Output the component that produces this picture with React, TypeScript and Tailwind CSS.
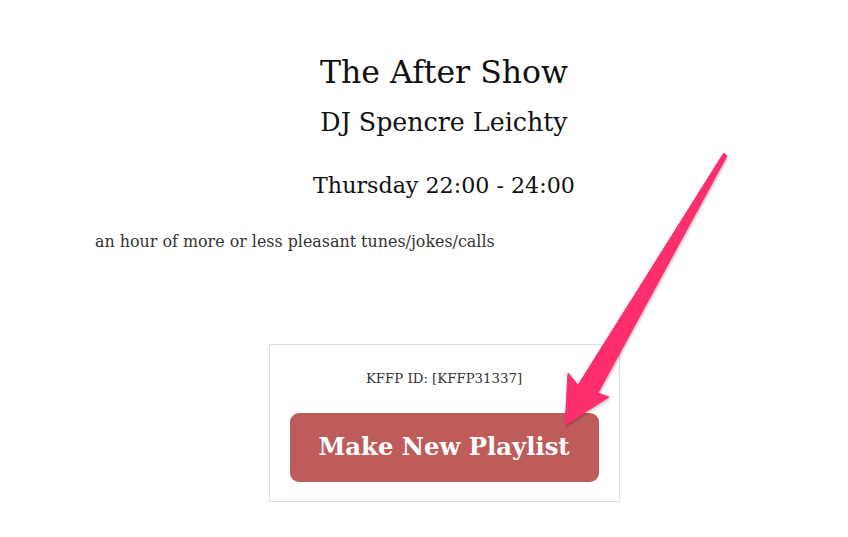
import React from "react";

export default function App() {
  const serif = { fontFamily: '"DejaVu Serif", "Liberation Serif", serif' };
  return (
    <div className="relative w-[848px] h-[537px] bg-white overflow-hidden" style={serif}>
      <div className="ml-[95px] w-[698px] pt-[50px] flex flex-col">
        <h1 className="text-center text-[31.5px] leading-[44px] text-[#111]">The After Show</h1>
        <h2 className="mt-[12px] text-center text-[25.3px] leading-[34px] text-[#111]">DJ Spencre Leichty</h2>
        <h3 className="mt-[30px] text-center text-[22.2px] leading-[30px] text-[#111]">Thursday 22:00 - 24:00</h3>
        <p className="mt-[30px] text-[15.9px] leading-[24px] text-[#333]">an hour of more or less pleasant tunes/jokes/calls</p>
        <div className="mt-[90px] self-center w-[351px] h-[158px] border border-[#dedede] flex flex-col items-center">
          <div className="mt-[24px] text-[13.3px] leading-[20px] text-[#333]">KFFP ID: [KFFP31337]</div>
          <button className="mt-[24px] w-[309px] h-[69px] rounded-[9px] bg-[#be5b5b] text-white font-bold text-[24.3px]">
            Make New Playlist
          </button>
        </div>
      </div>
      <svg className="absolute left-0 top-0" width="848" height="537" viewBox="0 0 848 537">
        <defs>
          <filter id="sh" x="-20%" y="-20%" width="140%" height="140%">
            <feDropShadow dx="1" dy="1.5" stdDeviation="1.2" floodColor="#000" floodOpacity="0.25" />
          </filter>
        </defs>
        <path
          d="M723.2 153.8 Q725 152.5 726.8 156.2 L598 393 L609 397 L565 425 L568 373 L578 385 Z"
          fill="#ff2d6d"
          stroke="#ff2d6d"
          strokeWidth="1"
          strokeLinejoin="round"
          filter="url(#sh)"
        />
      </svg>
    </div>
  );
}
